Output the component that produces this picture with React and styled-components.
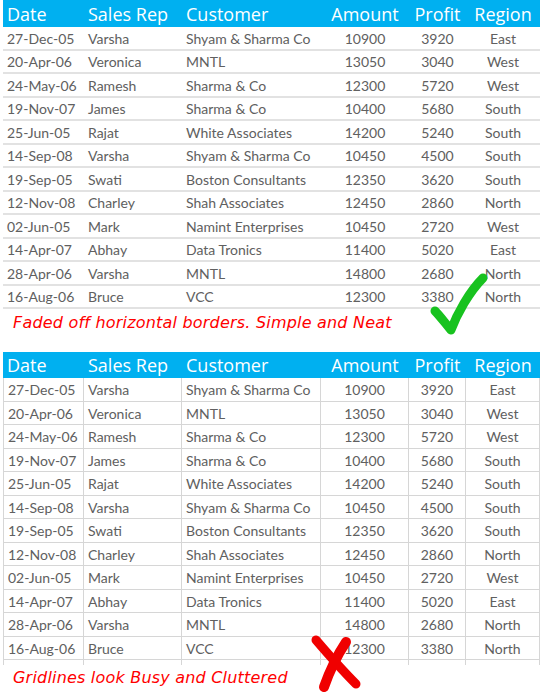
import React from 'react';
import styled, { createGlobalStyle } from 'styled-components';

const GlobalStyle = createGlobalStyle`
  html, body {
    margin: 0;
    padding: 0;
    background: #ffffff;
  }
`;

const rows = [
  ['27-Dec-05', 'Varsha', 'Shyam & Sharma Co', '10900', '3920', 'East'],
  ['20-Apr-06', 'Veronica', 'MNTL', '13050', '3040', 'West'],
  ['24-May-06', 'Ramesh', 'Sharma & Co', '12300', '5720', 'West'],
  ['19-Nov-07', 'James', 'Sharma & Co', '10400', '5680', 'South'],
  ['25-Jun-05', 'Rajat', 'White Associates', '14200', '5240', 'South'],
  ['14-Sep-08', 'Varsha', 'Shyam & Sharma Co', '10450', '4500', 'South'],
  ['19-Sep-05', 'Swati', 'Boston Consultants', '12350', '3620', 'South'],
  ['12-Nov-08', 'Charley', 'Shah Associates', '12450', '2860', 'North'],
  ['02-Jun-05', 'Mark', 'Namint Enterprises', '10450', '2720', 'West'],
  ['14-Apr-07', 'Abhay', 'Data Tronics', '11400', '5020', 'East'],
  ['28-Apr-06', 'Varsha', 'MNTL', '14800', '2680', 'North'],
  ['16-Aug-06', 'Bruce', 'VCC', '12300', '3380', 'North'],
];

const headers = ['Date', 'Sales Rep', 'Customer', 'Amount', 'Profit', 'Region'];
const centered = [false, false, false, true, true, true];

const Page = styled.div`
  width: 545px;
  display: flex;
  flex-direction: column;
`;

const Section = styled.div`
  position: relative;
  display: flex;
  flex-direction: column;
`;

const Table = styled.div`
  display: grid;
  grid-template-columns: 81px 98px 139px 88px 57px 74px;
  margin-left: 3px;
  width: 537px;
`;

const HeadCell = styled.div`
  box-sizing: border-box;
  height: ${({ $tall }) => ($tall ? '27px' : '26px')};
  background: #00b0f0;
  color: #ffffff;
  font-family: 'Open Sans', sans-serif;
  font-size: 18px;
  display: flex;
  align-items: center;
  justify-content: ${({ $center }) => ($center ? 'center' : 'flex-start')};
  padding-left: ${({ $center }) => ($center ? '0' : '4px')};
  white-space: nowrap;
`;

const Cell = styled.div`
  box-sizing: border-box;
  height: 23.5px;
  color: #606060;
  font-family: Lato, sans-serif;
  font-size: 14px;
  display: flex;
  align-items: center;
  justify-content: ${({ $center }) => ($center ? 'center' : 'flex-start')};
  padding-left: ${({ $center }) => ($center ? '0' : '4px')};
  padding-top: 1px;
  white-space: nowrap;
  border-bottom: ${({ $grid }) => ($grid ? '1px solid #d6d6d6' : '2px solid #e2e2e2')};
  border-right: ${({ $grid }) => ($grid ? '1px solid #d6d6d6' : 'none')};
  border-left: ${({ $grid, $first }) => ($grid && $first ? '1px solid #d6d6d6' : 'none')};
`;

const Stub = styled.div`
  height: 5px;
  border-right: 1px solid #d6d6d6;
  border-left: ${({ $first }) => ($first ? '1px solid #d6d6d6' : 'none')};
`;

const Note = styled.div`
  height: ${({ $h }) => $h};
  padding-left: 13px;
  padding-top: ${({ $pt }) => $pt};
  box-sizing: border-box;
  color: #ff0000;
  font-family: 'DejaVu Sans', sans-serif;
  font-style: italic;
  font-size: 16px;
  letter-spacing: 0.2px;
`;

const Mark = styled.svg`
  position: absolute;
  left: ${({ $x }) => $x}px;
  top: ${({ $y }) => $y}px;
`;

const DataTable = ({ grid }) => (
  <Table>
    {headers.map((h, i) => (
      <HeadCell key={h} $center={centered[i]} $tall={!grid}>
        {h}
      </HeadCell>
    ))}
    {rows.map((r, ri) =>
      r.map((v, i) => (
        <Cell key={`${ri}-${i}`} $center={centered[i]} $grid={grid} $first={i === 0}>
          {v}
        </Cell>
      )),
    )}
    {grid && headers.map((h, i) => <Stub key={`s-${h}`} $first={i === 0} />)}
  </Table>
);

const App = () => (
  <Page>
    <GlobalStyle />
    <Section>
      <DataTable />
      <Note $h="43px" $pt="4px">Faded off horizontal borders. Simple and Neat</Note>
      <Mark $x={425} $y={270} width="70" height="70" viewBox="0 0 70 70">
        <path
          d="M10 41 C15 46 20 53 26 60 C32 44 44 22 58 8"
          fill="none"
          stroke="#18c21f"
          strokeWidth="9"
          strokeLinecap="round"
          strokeLinejoin="round"
        />
      </Mark>
    </Section>
    <Section>
      <DataTable grid />
      <Note $h="29px" $pt="3px">Gridlines look Busy and Cluttered</Note>
      <Mark $x={300} $y={280} width="70" height="64" viewBox="0 0 70 64">
        <path
          d="M16 8 C28 22 42 38 56 52"
          fill="none"
          stroke="#f00000"
          strokeWidth="9"
          strokeLinecap="round"
        />
        <path
          d="M46 10 C38 22 30 38 24 55"
          fill="none"
          stroke="#f00000"
          strokeWidth="10"
          strokeLinecap="round"
        />
      </Mark>
    </Section>
  </Page>
);

export default App;
